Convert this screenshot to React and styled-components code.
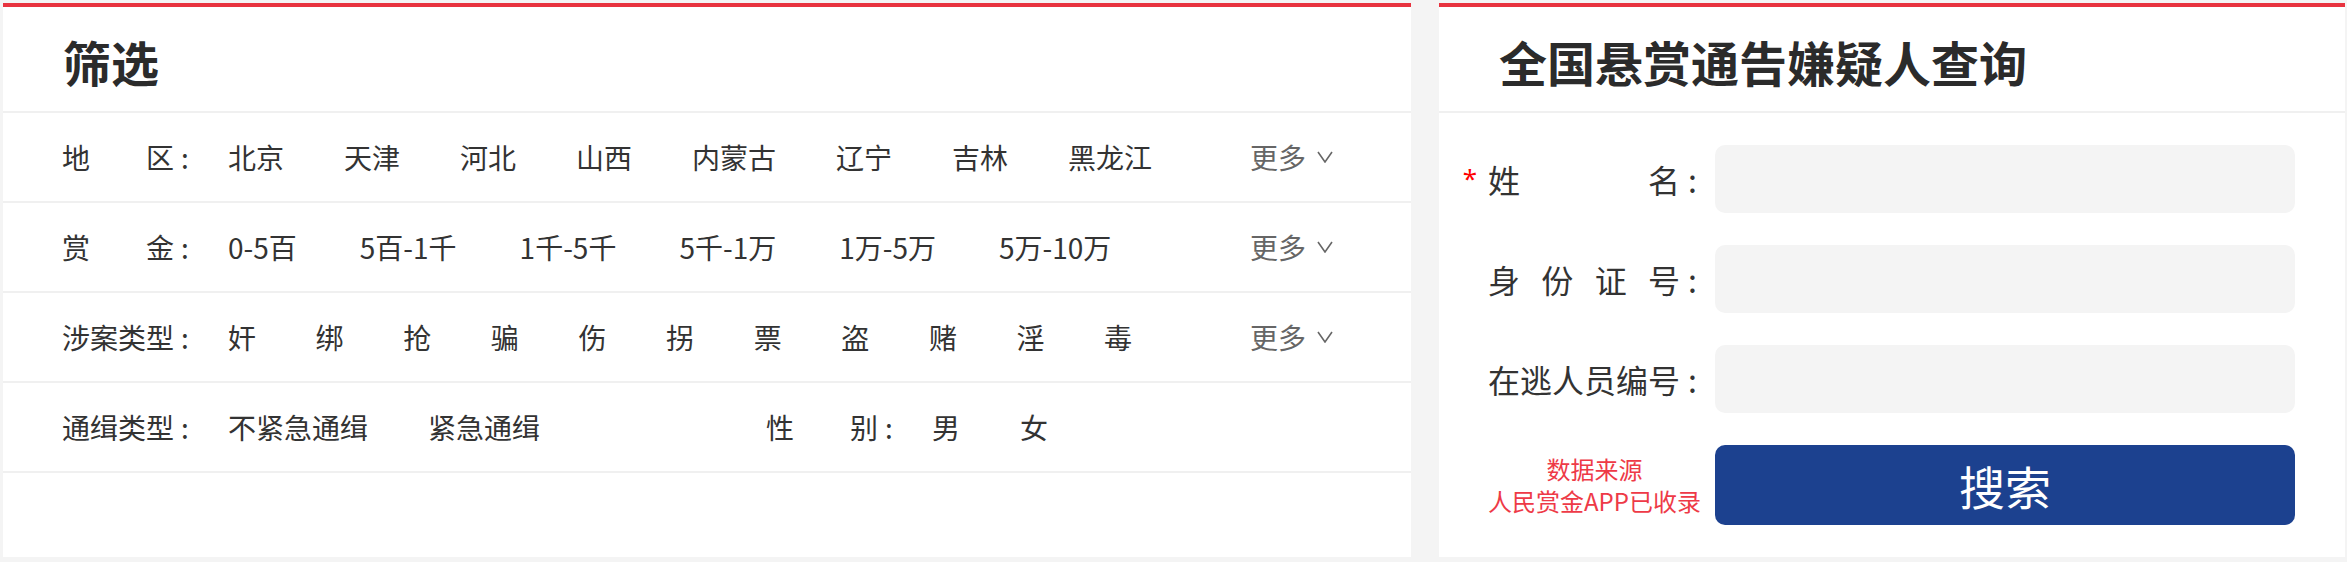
import React from 'react';
import styled, { createGlobalStyle } from 'styled-components';

const GlobalStyle = createGlobalStyle`
  html, body { margin: 0; padding: 0; background: #f4f4f4; }
  body { font-family: "Noto Sans CJK SC", "Noto Sans", sans-serif; color: #333; }
  * { box-sizing: border-box; }
`;

const Page = styled.div`
  display: flex;
  gap: 28px;
  padding: 3px 2px 5px 3px;
  width: 2347px;
  height: 562px;
`;

const Panel = styled.section`
  background: #fff;
  border-top: 4px solid #e8333f;
  height: 554px;
  width: ${(p) => (p.$width ? `${p.$width}px` : 'auto')};
  flex: ${(p) => (p.$width ? 'none' : '1')};
  display: flex;
  flex-direction: column;
`;

const PanelHeader = styled.div`
  height: 106px;
  flex: none;
  border-bottom: 2px solid #f0f0f0;
  display: flex;
  align-items: center;
  padding: 3px 0 0 60px;
`;

const Title = styled.h2`
  margin: 0;
  font-size: 48px;
  font-weight: 700;
  color: #2b2b2b;
  letter-spacing: ${(p) => p.$spacing || 0}px;
  line-height: 1;
  white-space: nowrap;
`;

const FilterRow = styled.div`
  height: 90px;
  flex: none;
  border-bottom: 2px solid #f0f0f0;
  display: flex;
  align-items: center;
  padding: 0 78px 0 59px;
  font-size: 28px;
`;

const Field = styled.div`
  display: flex;
  align-items: center;
  width: ${(p) => (p.$width ? `${p.$width}px` : 'auto')};
  flex: none;
`;

const Label = styled.div`
  display: flex;
  align-items: center;
  width: ${(p) => p.$width}px;
  flex: none;
  position: relative;
  white-space: nowrap;
`;

const LabelText = styled.span`
  display: flex;
  justify-content: space-between;
  width: ${(p) => p.$width}px;
`;

const Colon = styled.span`
  margin-left: ${(p) => p.$gap}px;
`;

const Value = styled.span`
  margin-right: ${(p) => p.$gap}px;
  white-space: nowrap;
  cursor: pointer;
`;

const More = styled.span`
  margin-left: auto;
  color: #666;
  display: flex;
  align-items: center;
  gap: 11px;
  white-space: nowrap;
  cursor: pointer;
`;

const Form = styled.div`
  display: flex;
  flex-direction: column;
  gap: 32px;
  padding: 32px 50px 0 49px;
`;

const FormRow = styled.div`
  display: flex;
  align-items: center;
  height: ${(p) => p.$height}px;
  font-size: 32px;
`;

const Star = styled.span`
  position: absolute;
  right: 100%;
  margin-right: 11px;
  top: 9px;
  font-size: 26px;
  line-height: 1;
  color: #ff0000;
  font-family: "Noto Sans", sans-serif;
`;

const Input = styled.input`
  flex: 1;
  height: 100%;
  border: none;
  border-radius: 10px;
  background: #f4f4f4;
  outline: none;
`;

const Note = styled.div`
  width: 227px;
  flex: none;
  padding-right: 14px;
  text-align: center;
  color: #ee3a47;
  font-size: 24px;
  line-height: 32px;
  white-space: nowrap;
`;

const SearchButton = styled.button`
  flex: 1;
  height: 100%;
  border: none;
  border-radius: 10px;
  background: #1c418f;
  color: #fff;
  font-family: "Noto Sans CJK SC", "Noto Sans", sans-serif;
  font-size: 46px;
  cursor: pointer;
`;

const Chevron = () => (
  <svg width="16" height="12" viewBox="0 0 16 12" fill="none">
    <polyline points="1,1 8,11 15,1" stroke="#666" strokeWidth="1.6" />
  </svg>
);

const LabelChars = ({ text, width }) => (
  <LabelText $width={width}>
    {text.split('').map((c, i) => (
      <span key={i}>{c}</span>
    ))}
  </LabelText>
);

const FilterLabel = ({ text }) => (
  <Label $width={166}>
    <LabelChars text={text} width={112} />
    <Colon $gap={7}>:</Colon>
  </Label>
);

const filters = [
  { label: '地区', gap: 60, values: ['北京', '天津', '河北', '山西', '内蒙古', '辽宁', '吉林', '黑龙江'] },
  { label: '赏金', gap: 63, values: ['0-5百', '5百-1千', '1千-5千', '5千-1万', '1万-5万', '5万-10万'] },
  { label: '涉案类型', gap: 59.6, values: ['奸', '绑', '抢', '骗', '伤', '拐', '票', '盗', '赌', '淫', '毒'] },
];

const FormLabel = ({ text, required }) => (
  <Label $width={227}>
    {required && <Star>*</Star>}
    <LabelChars text={text} width={192} />
    <Colon $gap={8}>:</Colon>
  </Label>
);

export default function App() {
  return (
    <>
      <GlobalStyle />
      <Page>
        <Panel $width={1408}>
          <PanelHeader>
            <Title>筛选</Title>
          </PanelHeader>
          {filters.map((f) => (
            <FilterRow key={f.label}>
              <Field>
                <FilterLabel text={f.label} />
                {f.values.map((v) => (
                  <Value key={v} $gap={f.gap}>{v}</Value>
                ))}
              </Field>
              <More>
                更多 <Chevron />
              </More>
            </FilterRow>
          ))}
          <FilterRow>
            <Field $width={704}>
              <FilterLabel text="通缉类型" />
              <Value $gap={60}>不紧急通缉</Value>
              <Value $gap={60}>紧急通缉</Value>
            </Field>
            <Field>
              <FilterLabel text="性别" />
              <Value $gap={60}>男</Value>
              <Value $gap={60}>女</Value>
            </Field>
          </FilterRow>
        </Panel>
        <Panel>
          <PanelHeader>
            <Title>全国悬赏通告嫌疑人查询</Title>
          </PanelHeader>
          <Form>
            <FormRow $height={68}>
              <FormLabel text="姓名" required />
              <Input />
            </FormRow>
            <FormRow $height={68}>
              <FormLabel text="身份证号" />
              <Input />
            </FormRow>
            <FormRow $height={68}>
              <FormLabel text="在逃人员编号" />
              <Input />
            </FormRow>
            <FormRow $height={80}>
              <Note>
                数据来源
                <br />
                人民赏金APP已收录
              </Note>
              <SearchButton>搜索</SearchButton>
            </FormRow>
          </Form>
        </Panel>
      </Page>
    </>
  );
}
